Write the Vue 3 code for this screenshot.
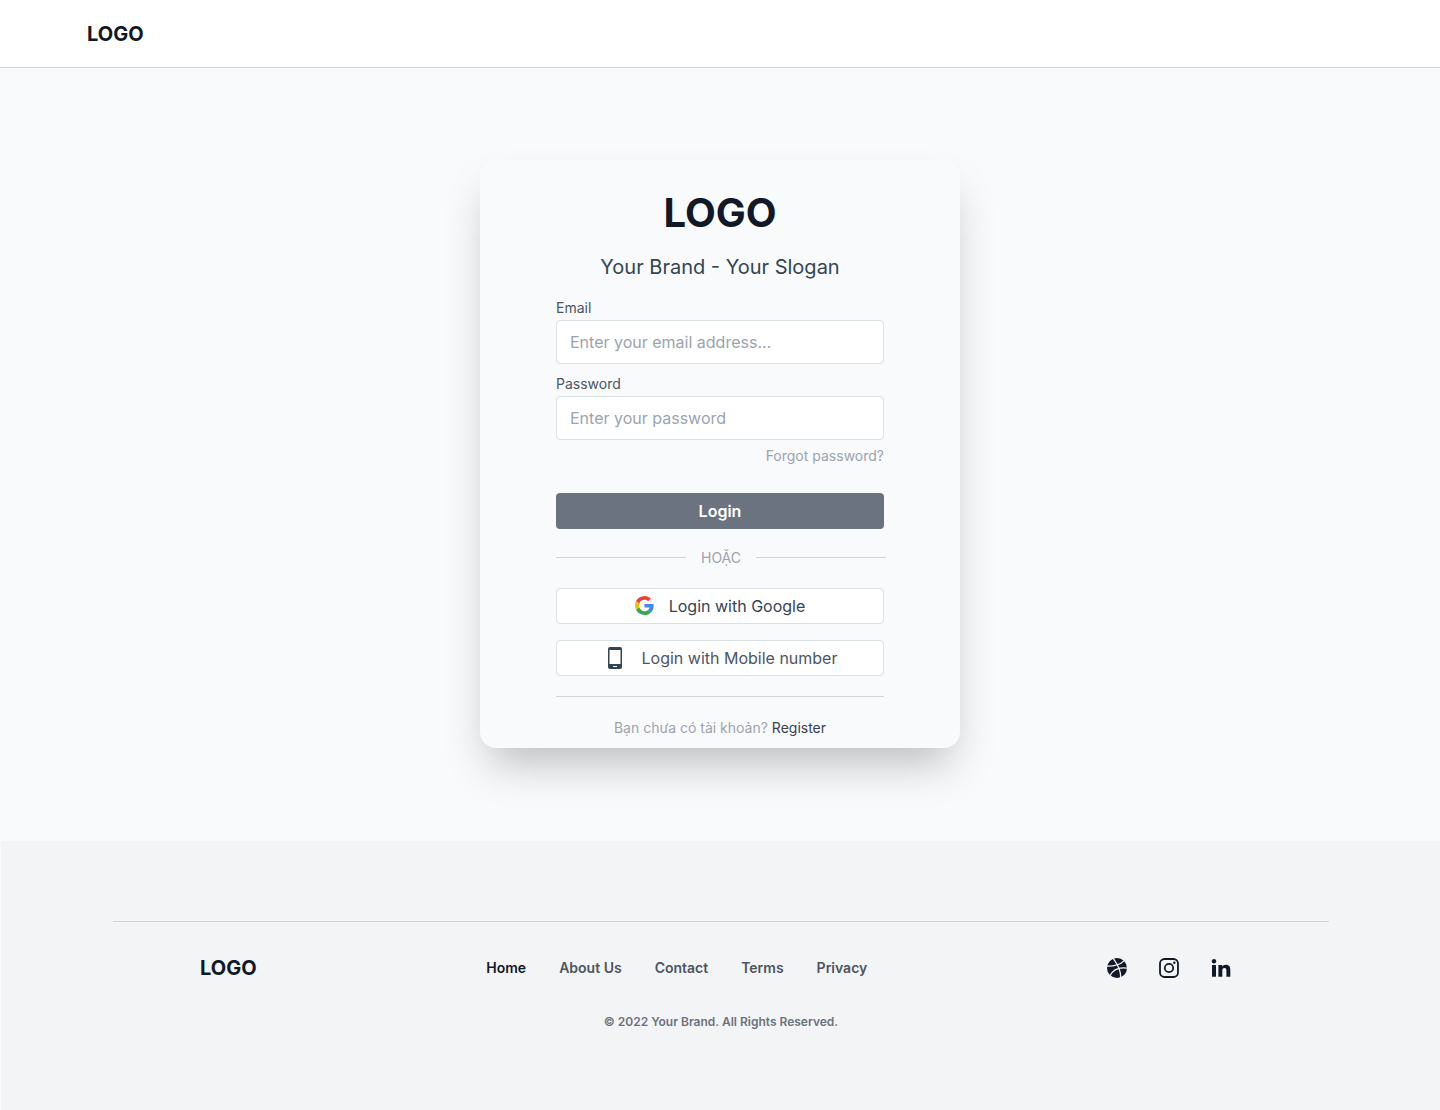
<script setup>
const navLinks = ['Home', 'About Us', 'Contact', 'Terms', 'Privacy']
</script>

<template>
  <div class="page">
    <header class="topbar">
      <a class="brand" href="#">LOGO</a>
    </header>

    <main class="content">
      <form class="card" @submit.prevent>
        <h1 class="title">LOGO</h1>
        <p class="slogan">Your Brand - Your Slogan</p>

        <div class="field">
          <label for="email">Email</label>
          <input id="email" type="email" placeholder="Enter your email address..." />
        </div>
        <div class="field">
          <label for="password">Password</label>
          <input id="password" type="password" placeholder="Enter your password" />
        </div>
        <a class="forgot" href="#">Forgot password?</a>

        <button class="submit" type="submit">Login</button>

        <div class="divider"><span>HOẶC</span></div>

        <div class="providers">
          <button class="provider" type="button">
            <svg class="google" viewBox="0 0 48 48" aria-hidden="true">
              <path fill="#EA4335" d="M24 9.5c3.54 0 6.71 1.22 9.21 3.6l6.85-6.85C35.9 2.38 30.47 0 24 0 14.62 0 6.51 5.38 2.56 13.22l7.98 6.19C12.43 13.72 17.74 9.5 24 9.5z" />
              <path fill="#4285F4" d="M46.98 24.55c0-1.57-.15-3.09-.38-4.55H24v9.02h12.94c-.58 2.96-2.26 5.48-4.78 7.18l7.73 6c4.51-4.18 7.09-10.36 7.09-17.65z" />
              <path fill="#FBBC05" d="M10.53 28.59c-.48-1.45-.76-2.99-.76-4.59s.27-3.14.76-4.59l-7.98-6.19C.92 16.46 0 20.12 0 24c0 3.88.92 7.54 2.56 10.78l7.97-6.19z" />
              <path fill="#34A853" d="M24 48c6.48 0 11.93-2.13 15.89-5.81l-7.73-6c-2.15 1.45-4.92 2.3-8.16 2.3-6.26 0-11.57-4.22-13.47-9.91l-7.98 6.19C6.51 42.62 14.62 48 24 48z" />
            </svg>
            <span>Login with Google</span>
          </button>
          <button class="provider mobile" type="button">
            <svg class="phone" viewBox="0 0 24 24" aria-hidden="true">
              <path fill="#334552" fill-rule="evenodd" d="M7 1h10a2 2 0 0 1 2 2v18a2 2 0 0 1-2 2H7a2 2 0 0 1-2-2V3a2 2 0 0 1 2-2zM6.500 4v14h11V4zM10 20v1h4v-1z" />
            </svg>
            <span>Login with Mobile number</span>
          </button>
        </div>

        <p class="register">Bạn chưa có tài khoản? <a href="#">Register</a></p>
      </form>
    </main>

    <footer class="footer">
      <div class="footer-row">
        <a class="brand" href="#">LOGO</a>
        <nav class="links" aria-label="Footer">
          <a v-for="(link, i) in navLinks" :key="link" href="#" :class="{ active: i === 0 }">{{ link }}</a>
        </nav>
        <div class="social">
          <a href="#" aria-label="Dribbble">
            <svg viewBox="0 0 24 24">
              <circle cx="12" cy="12" r="10" fill="#111827" />
              <g fill="none" stroke="#f3f4f6" stroke-width="1.3">
                <path d="M8 2.200C12 7.500 16 14 15.800 22" />
                <path d="M1.600 10.200C8.500 10.400 15 9 19.200 4.600" />
                <path d="M5 19.800C8 13.500 14 10.800 22.400 12.200" />
              </g>
            </svg>
          </a>
          <a href="#" aria-label="Instagram">
            <svg viewBox="0 0 24 24" fill="none" stroke="#111827" stroke-width="1.800">
              <rect x="3" y="3" width="18" height="18" rx="4.500" />
              <circle cx="12" cy="12" r="4.200" />
              <circle cx="17.300" cy="6.700" r="1.200" fill="#111827" stroke="none" />
            </svg>
          </a>
          <a href="#" aria-label="LinkedIn">
            <svg viewBox="0 0 24 24" fill="#111827">
              <circle cx="5" cy="5.200" r="2.200" />
              <path d="M3 9h4v11.700H3zM9.400 9h3.800v1.600c.6-1.100 1.900-1.900 3.700-1.900 3.600 0 4.400 2.300 4.400 5.400v6.600h-3.900v-5.900c0-1.400-.1-2.900-1.900-2.900s-2.200 1.400-2.200 2.800v6H9.400z" />
            </svg>
          </a>
        </div>
      </div>
      <p class="copyright">© 2022 Your Brand. All Rights Reserved.</p>
    </footer>
  </div>
</template>

<style>
body {
  margin: 0;
  background: #f9fafc;
}
</style>

<style scoped>
.page {
  min-height: 100vh;
  display: flex;
  flex-direction: column;
  font-family: Inter, "Liberation Sans", sans-serif;
  color: #111827;
}
.page * {
  box-sizing: border-box;
}
a {
  color: inherit;
  text-decoration: none;
}
h1,
p {
  margin: 0;
}
button,
input {
  font: inherit;
}
.topbar {
  height: 68px;
  padding: 0 87px;
  display: flex;
  align-items: center;
  background: #fff;
  border-bottom: 1px solid #d1d5db;
}
.brand {
  font-size: 20px;
  line-height: 28px;
  font-weight: 700;
}
.content {
  flex: 1;
  display: flex;
  justify-content: center;
  align-items: center;
  padding: 91px 24px 93px;
}
.card {
  width: 480px;
  padding: 29px 76px 10px;
  display: flex;
  flex-direction: column;
  border-radius: 16px;
  background: #f9fafc;
  box-shadow: 0 24px 44px -10px rgba(0, 0, 0, 0.25);
}
.title {
  font-size: 40px;
  line-height: 48px;
  font-weight: 700;
  text-align: center;
}
.slogan {
  margin: 16px 0 15px;
  font-size: 20px;
  line-height: 28px;
  text-align: center;
  color: #334552;
}
.field {
  display: flex;
  flex-direction: column;
  margin-bottom: 8px;
}
.field label {
  font-size: 14px;
  line-height: 24px;
  color: #4b5563;
}
.field input {
  height: 44px;
  padding: 0 13px;
  border: 1px solid #d9e0e6;
  border-radius: 4px;
  background: #fff;
  font-size: 16px;
  color: #111827;
}
.field input::placeholder {
  color: #9ca3af;
  opacity: 1;
}
.forgot {
  align-self: flex-end;
  font-size: 14px;
  line-height: 20px;
  margin: -2px 0 27px;
  color: #9ca3af;
}
.submit {
  height: 36px;
  border: 0;
  border-radius: 4px;
  background: #6b7280;
  color: #fff;
  font-size: 16px;
  font-weight: 600;
}
.divider {
  display: flex;
  align-items: center;
  gap: 15px;
  margin: 19px -2px 20px 0;
  font-size: 14px;
  line-height: 20px;
  color: #9ca3af;
}
.divider::before,
.divider::after {
  content: "";
  flex: 1;
  height: 1px;
  background: #d1d5db;
}
.providers {
  display: flex;
  flex-direction: column;
  gap: 16px;
  padding-bottom: 20px;
  border-bottom: 1px solid #d1d5db;
}
.provider {
  height: 36px;
  padding: 0;
  display: flex;
  align-items: center;
  justify-content: center;
  gap: 15px;
  border: 1px solid #d9e0e6;
  border-radius: 4px;
  background: #fff;
  color: #334552;
  font-size: 16px;
}
.mobile {
  color: #4b5563;
}
.google {
  width: 19px;
  height: 19px;
}
.phone {
  width: 24px;
  height: 24px;
}
.register {
  margin-top: 21px;
  font-size: 14px;
  line-height: 20px;
  text-align: center;
  color: #9ca3af;
}
.register a {
  color: #374151;
}
.footer {
  margin-left: 1px;
  padding: 80px 111px 80px 112px;
  background: #f3f4f6;
}
.footer-row {
  display: flex;
  align-items: center;
  justify-content: space-between;
  padding: 32px 96px 32px 87px;
  border-top: 1px solid #d1d5db;
}
.links {
  display: flex;
  gap: 33px;
  margin-right: 8px;
  font-size: 14px;
  line-height: 20px;
  font-weight: 600;
  color: #4b5563;
}
.active {
  color: #111827;
}
.social {
  display: flex;
  gap: 28px;
}
.social svg {
  display: block;
  width: 24px;
  height: 24px;
}
.copyright {
  font-size: 12px;
  line-height: 16px;
  font-weight: 600;
  text-align: center;
  color: #6b7280;
}
</style>
